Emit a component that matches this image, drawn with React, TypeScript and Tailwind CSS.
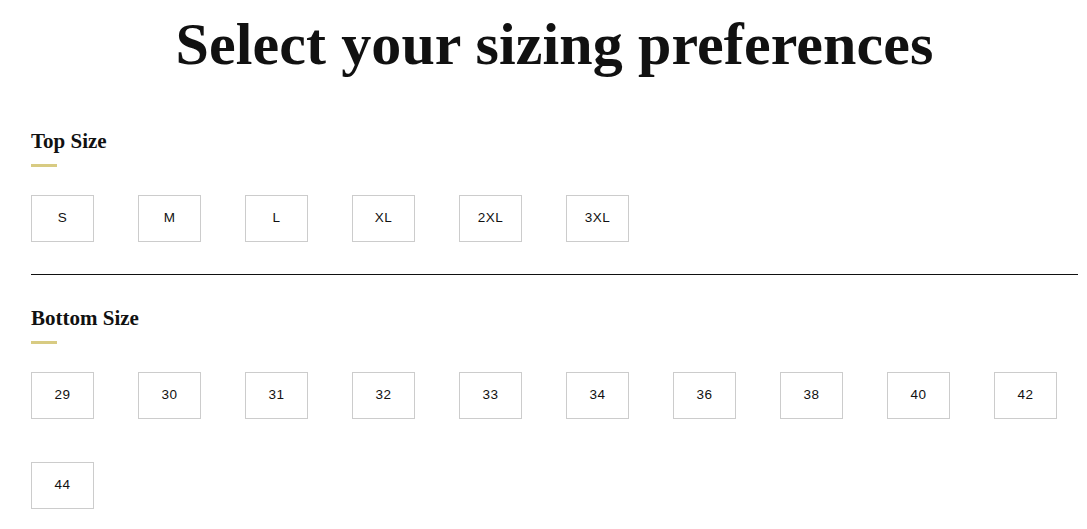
import React from 'react';

const topSizes = ['S', 'M', 'L', 'XL', '2XL', '3XL'];
const bottomSizes = ['29', '30', '31', '32', '33', '34', '36', '38', '40', '42', '44'];

const serif = { fontFamily: '"Liberation Serif", "Times New Roman", serif' };

interface SizeGroupProps {
  title: string;
  sizes: string[];
}

const SizeGroup: React.FC<SizeGroupProps> = ({ title, sizes }) => {
  return (
    <div>
      <h2 className="text-[21px] font-bold leading-none text-[#111]" style={serif}>
        {title}
      </h2>
      <div className="mt-[12px] h-[3px] w-[26px] bg-[#d8cb82]" />
      <div className="mt-[28px] flex flex-wrap gap-x-[44px] gap-y-[43px]">
        {sizes.map((size) => (
          <button
            key={size}
            className="flex h-[47px] w-[63px] items-center justify-center border border-[#cccccc] bg-white text-[13.5px] tracking-[0.5px] text-[#111]"
            style={{ fontFamily: '"Liberation Sans", Arial, sans-serif' }}
          >
            {size}
          </button>
        ))}
      </div>
    </div>
  );
};

export default function App() {
  return (
    <div className="min-h-[529px] w-[1087px] bg-white">
      <h1
        className="pl-[22px] pt-[14px] text-center text-[60px] font-bold leading-none tracking-[0.1px] text-[#111]"
        style={serif}
      >
        Select your sizing preferences
      </h1>
      <div className="ml-[31px] w-[1047px]">
        <div className="mt-[57px]">
          <SizeGroup title="Top Size" sizes={topSizes} />
        </div>
        <div className="mt-[32px] h-px w-full bg-[#111]" />
        <div className="mt-[33px]">
          <SizeGroup title="Bottom Size" sizes={bottomSizes} />
        </div>
      </div>
    </div>
  );
}
